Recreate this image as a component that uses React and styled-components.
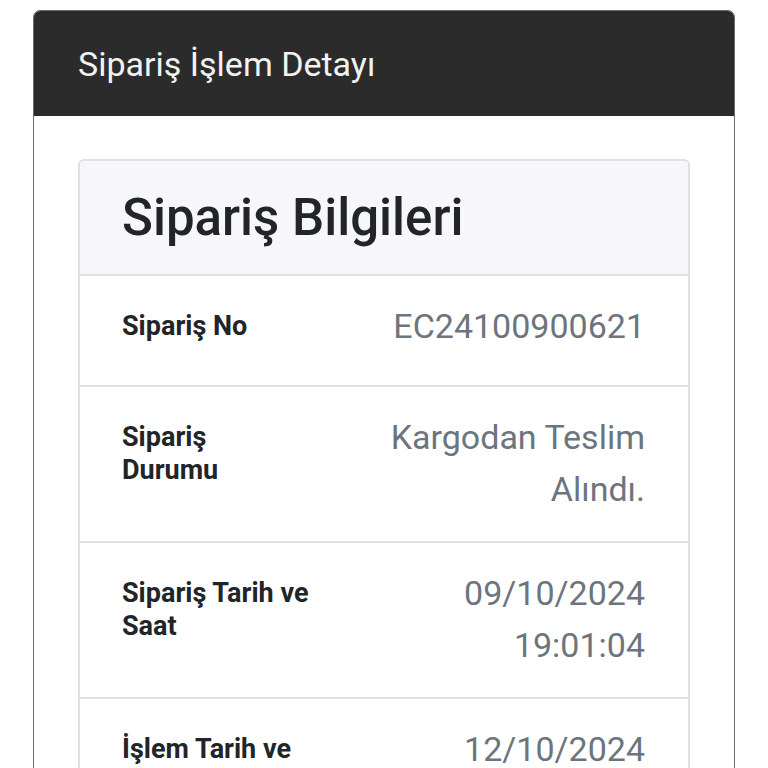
import styled, { createGlobalStyle } from "styled-components";

const GlobalStyle = createGlobalStyle`
  html, body {
    margin: 0;
    padding: 0;
    background: #ffffff;
    font-family: Roboto, "Noto Sans", "Liberation Sans", sans-serif;
  }
`;

// each label / value is given as its displayed lines
const rows = [
  { label: ["Sipariş No"], value: ["EC24100900621"] },
  { label: ["Sipariş", "Durumu"], value: ["Kargodan Teslim", "Alındı."] },
  { label: ["Sipariş Tarih ve", "Saat"], value: ["09/10/2024", "19:01:04"] },
  { label: ["İşlem Tarih ve", "Saat"], value: ["12/10/2024", "14:22:37"] },
];

const App = () => {
  return (
    <>
      <GlobalStyle />
      <Page>
        <Panel>
          <PanelHeader>Sipariş İşlem Detayı</PanelHeader>
          <PanelBody>
            <InfoCard>
              <CardHeader>Sipariş Bilgileri</CardHeader>
              {rows.map((row) => (
                <Row key={row.label.join(" ")}>
                  <Label>
                    {row.label.map((l) => (
                      <div key={l}>{l}</div>
                    ))}
                  </Label>
                  <Value>
                    {row.value.map((v) => (
                      <div key={v}>{v}</div>
                    ))}
                  </Value>
                </Row>
              ))}
            </InfoCard>
          </PanelBody>
        </Panel>
      </Page>
    </>
  );
};

export default App;

const Page = styled.div`
  padding: 10px 33px 0;
  height: 768px;
  box-sizing: border-box;
  overflow: hidden;
`;

const Panel = styled.div`
  border: 1.5px solid #6e6e6e;
  border-radius: 7px;
  overflow: hidden;
  background: #fff;
`;

const PanelHeader = styled.div`
  background: #2b2b2b;
  color: #f2f2f2;
  height: 105px;
  display: flex;
  align-items: center;
  padding: 0 44px;
  font-size: 34px;
  font-weight: 400;
`;

const PanelBody = styled.div`
  padding: 43px 44px 0;
`;

const InfoCard = styled.div`
  border: 2px solid #e1e1e1;
  border-radius: 6px;
  overflow: hidden;
`;

const CardHeader = styled.div`
  background: #f7f7f9;
  border-bottom: 2px solid #e1e1e1;
  height: 113px;
  display: flex;
  align-items: center;
  padding: 0 42px;
  font-size: 51px;
  font-weight: 500;
  color: #212529;
`;

const Row = styled.div`
  display: flex;
  justify-content: space-between;
  align-items: flex-start;
  padding: 24px 43px 26px 42px;
  border-bottom: 2px solid #e1e1e1;
`;

const Label = styled.div`
  font-size: 27px;
  font-weight: 700;
  line-height: 33px;
  color: #212529;
  padding-top: 10px;
  margin-bottom: 16px;
  white-space: nowrap;
`;

const Value = styled.div`
  text-align: right;
  font-size: 34px;
  line-height: 52px;
  color: #6c757d;
  white-space: nowrap;
`;
